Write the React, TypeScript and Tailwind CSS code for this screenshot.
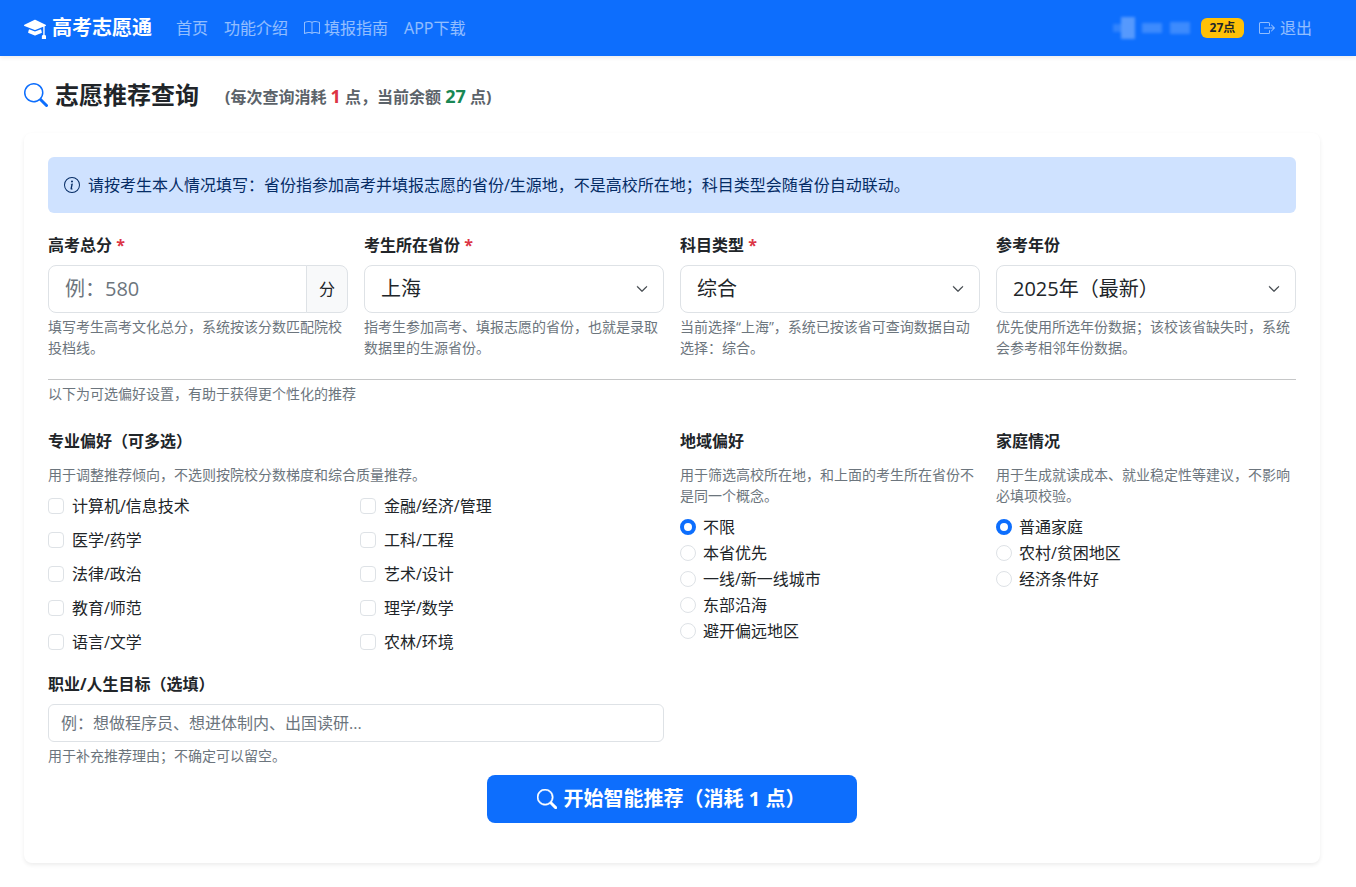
import { BsBook, BsBoxArrowRight, BsChevronDown, BsInfoCircle, BsMortarboardFill, BsSearch } from "react-icons/bs"

const majors = [
  "计算机/信息技术",
  "金融/经济/管理",
  "医学/药学",
  "工科/工程",
  "法律/政治",
  "艺术/设计",
  "教育/师范",
  "理学/数学",
  "语言/文学",
  "农林/环境",
]

function Label({ text, required }: { text: string; required?: boolean }) {
  return (
    <label className="mb-2 block h-6 font-bold leading-6 text-[#212529]">
      {text}
      {required && <span className="text-[#dc3545]"> *</span>}
    </label>
  )
}

function Help({ children }: { children: string }) {
  return <div className="mt-[3px] text-sm leading-[21px] text-[#6c757d]">{children}</div>
}

function SelectBox({ value }: { value: string }) {
  return (
    <div className="relative">
      <select
        defaultValue={value}
        className="h-12 w-full appearance-none rounded-lg border border-[#dee2e6] bg-white pl-4 pr-10 text-xl text-[#212529]"
      >
        <option>{value}</option>
      </select>
      <BsChevronDown className="pointer-events-none absolute right-4 top-[18px] size-3 stroke-[0.8] text-[#343a40]" />
    </div>
  )
}

function Radio({ text, checked }: { text: string; checked?: boolean }) {
  return (
    <label className="mb-0.5 flex h-6 items-center gap-[7px] text-[#212529]">
      <input
        type="radio"
        defaultChecked={checked}
        className="size-4 appearance-none rounded-full border border-[#dee2e6] bg-white checked:border-[4px] checked:border-[#0d6efd]"
      />
      {text}
    </label>
  )
}

export default function App() {
  return (
    <div className="min-h-screen bg-white font-['Open_Sans','Noto_Sans_CJK_SC',sans-serif] text-base text-[#212529]">
      {/* NAVBAR */}
      <nav className="flex h-14 items-center justify-between bg-[#0d6efd] pl-6 pr-9 shadow-[0_2px_4px_rgba(0,0,0,0.075)]">
        <div className="flex items-center">
          <a className="flex items-center gap-1.5 text-xl font-bold text-white">
            <BsMortarboardFill className="size-[22px]" />
            高考志愿通
          </a>
          <div className="ml-4 flex items-center text-white/55">
            <a className="px-2">首页</a>
            <a className="px-2">功能介绍</a>
            <a className="flex items-center gap-1 px-2">
              <BsBook className="size-4" />
              填报指南
            </a>
            <a className="px-2">APP下载</a>
          </div>
        </div>
        <div className="flex items-center pr-2">
          {/* blurred username */}
          <div className="flex items-center blur-[1.5px]">
            <div className="h-2 w-2 bg-white/15" />
            <div className="h-[22px] w-[14px] bg-white/30" />
            <div className="ml-[7px] h-2.5 w-5 bg-white/20" />
            <div className="ml-2 h-3 w-5 bg-white/20" />
          </div>
          <span className="ml-[11px] flex h-5 w-[43px] items-center justify-center rounded-md bg-[#ffc107] text-xs font-bold text-[#212529]">
            27点
          </span>
          <a className="ml-[15px] flex items-center gap-[5px] text-white/55">
            <BsBoxArrowRight className="size-4" />
            退出
          </a>
        </div>
      </nav>

      <main className="pb-6 pl-6 pr-9 pt-6">
        <div className="flex h-[29px] items-center">
          <BsSearch className="size-6 text-[#0d6efd]" />
          <h2 className="ml-[7px] text-2xl font-bold leading-[29px]">志愿推荐查询</h2>
          <span className="ml-[26px] mt-1 font-bold leading-6 text-[#5c636a]">
            (每次查询消耗 <span className="text-[18px] text-[#dc3545]">1</span> 点，当前余额{" "}
            <span className="text-[18px] text-[#198754]">27</span> 点)
          </span>
        </div>

        {/* CARD */}
        <div className="mt-6 rounded-lg bg-white p-6 shadow-[0_2px_4px_rgba(0,0,0,0.075)]">
          <div className="mb-5 flex h-14 items-center gap-2 rounded-md bg-[#cfe2ff] px-4 text-[#052c65]">
            <BsInfoCircle className="size-4" />
            请按考生本人情况填写：省份指参加高考并填报志愿的省份/生源地，不是高校所在地；科目类型会随省份自动联动。
          </div>

          <div className="grid grid-cols-4 gap-x-4">
            <div>
              <Label text="高考总分" required />
              <div className="flex h-12">
                <input
                  placeholder="例：580"
                  className="w-0 flex-1 rounded-l-lg border border-[#dee2e6] px-4 text-xl placeholder:text-[#6c757d]"
                />
                <span className="-ml-px flex w-[42px] items-center justify-center rounded-r-lg border border-[#dee2e6] bg-[#f8f9fa]">
                  分
                </span>
              </div>
              <Help>填写考生高考文化总分，系统按该分数匹配院校投档线。</Help>
            </div>
            <div>
              <Label text="考生所在省份" required />
              <SelectBox value="上海" />
              <Help>指考生参加高考、填报志愿的省份，也就是录取数据里的生源省份。</Help>
            </div>
            <div>
              <Label text="科目类型" required />
              <SelectBox value="综合" />
              <Help>当前选择“上海”，系统已按该省可查询数据自动选择：综合。</Help>
            </div>
            <div>
              <Label text="参考年份" />
              <SelectBox value="2025年（最新）" />
              <Help>优先使用所选年份数据；该校该省缺失时，系统会参考相邻年份数据。</Help>
            </div>
          </div>

          <hr className="mt-[21px] border-t border-[#c6c7c8]" />
          <div className="mt-[3px] text-sm leading-[21px] text-[#6c757d]">以下为可选偏好设置，有助于获得更个性化的推荐</div>

          <div className="mt-[25px] grid grid-cols-4 gap-x-4">
            <div className="col-span-2">
              <div className="mb-[11px] h-6 font-bold leading-6">专业偏好（可多选）</div>
              <div className="mb-[9px] text-sm leading-[21px] text-[#6c757d]">用于调整推荐倾向，不选则按院校分数梯度和综合质量推荐。</div>
              <div className="grid grid-cols-2 gap-x-2 gap-y-2.5">
                {majors.map((m) => (
                  <label key={m} className="flex h-6 items-center gap-2">
                    <input
                      type="checkbox"
                      className="size-4 appearance-none rounded border border-[#dee2e6] bg-white"
                    />
                    {m}
                  </label>
                ))}
              </div>

              <div className="mt-[18px]">
                <Label text="职业/人生目标（选填）" />
              </div>
              <input
                placeholder="例：想做程序员、想进体制内、出国读研..."
                className="h-[38px] w-full rounded-md border border-[#dee2e6] px-3 placeholder:text-[#6c757d]"
              />
              <Help>用于补充推荐理由；不确定可以留空。</Help>
            </div>

            <div>
              <div className="mb-[11px] h-6 font-bold leading-6">地域偏好</div>
              <div className="mb-[9px] text-sm leading-[21px] text-[#6c757d]">用于筛选高校所在地，和上面的考生所在省份不是同一个概念。</div>
              <Radio text="不限" checked />
              <Radio text="本省优先" />
              <Radio text="一线/新一线城市" />
              <Radio text="东部沿海" />
              <Radio text="避开偏远地区" />
            </div>

            <div>
              <div className="mb-[11px] h-6 font-bold leading-6">家庭情况</div>
              <div className="mb-[9px] text-sm leading-[21px] text-[#6c757d]">用于生成就读成本、就业稳定性等建议，不影响必填项校验。</div>
              <Radio text="普通家庭" checked />
              <Radio text="农村/贫困地区" />
              <Radio text="经济条件好" />
            </div>
          </div>

          <div className="mb-4 mt-[9px] flex justify-center">
            <button className="flex h-12 items-center gap-[7px] rounded-lg bg-[#0d6efd] pl-[50px] pr-[52px] text-xl font-bold text-white">
              <BsSearch className="size-5 stroke-[0.4]" />
              开始智能推荐（消耗 1 点）
            </button>
          </div>
        </div>
      </main>
    </div>
  )
}
